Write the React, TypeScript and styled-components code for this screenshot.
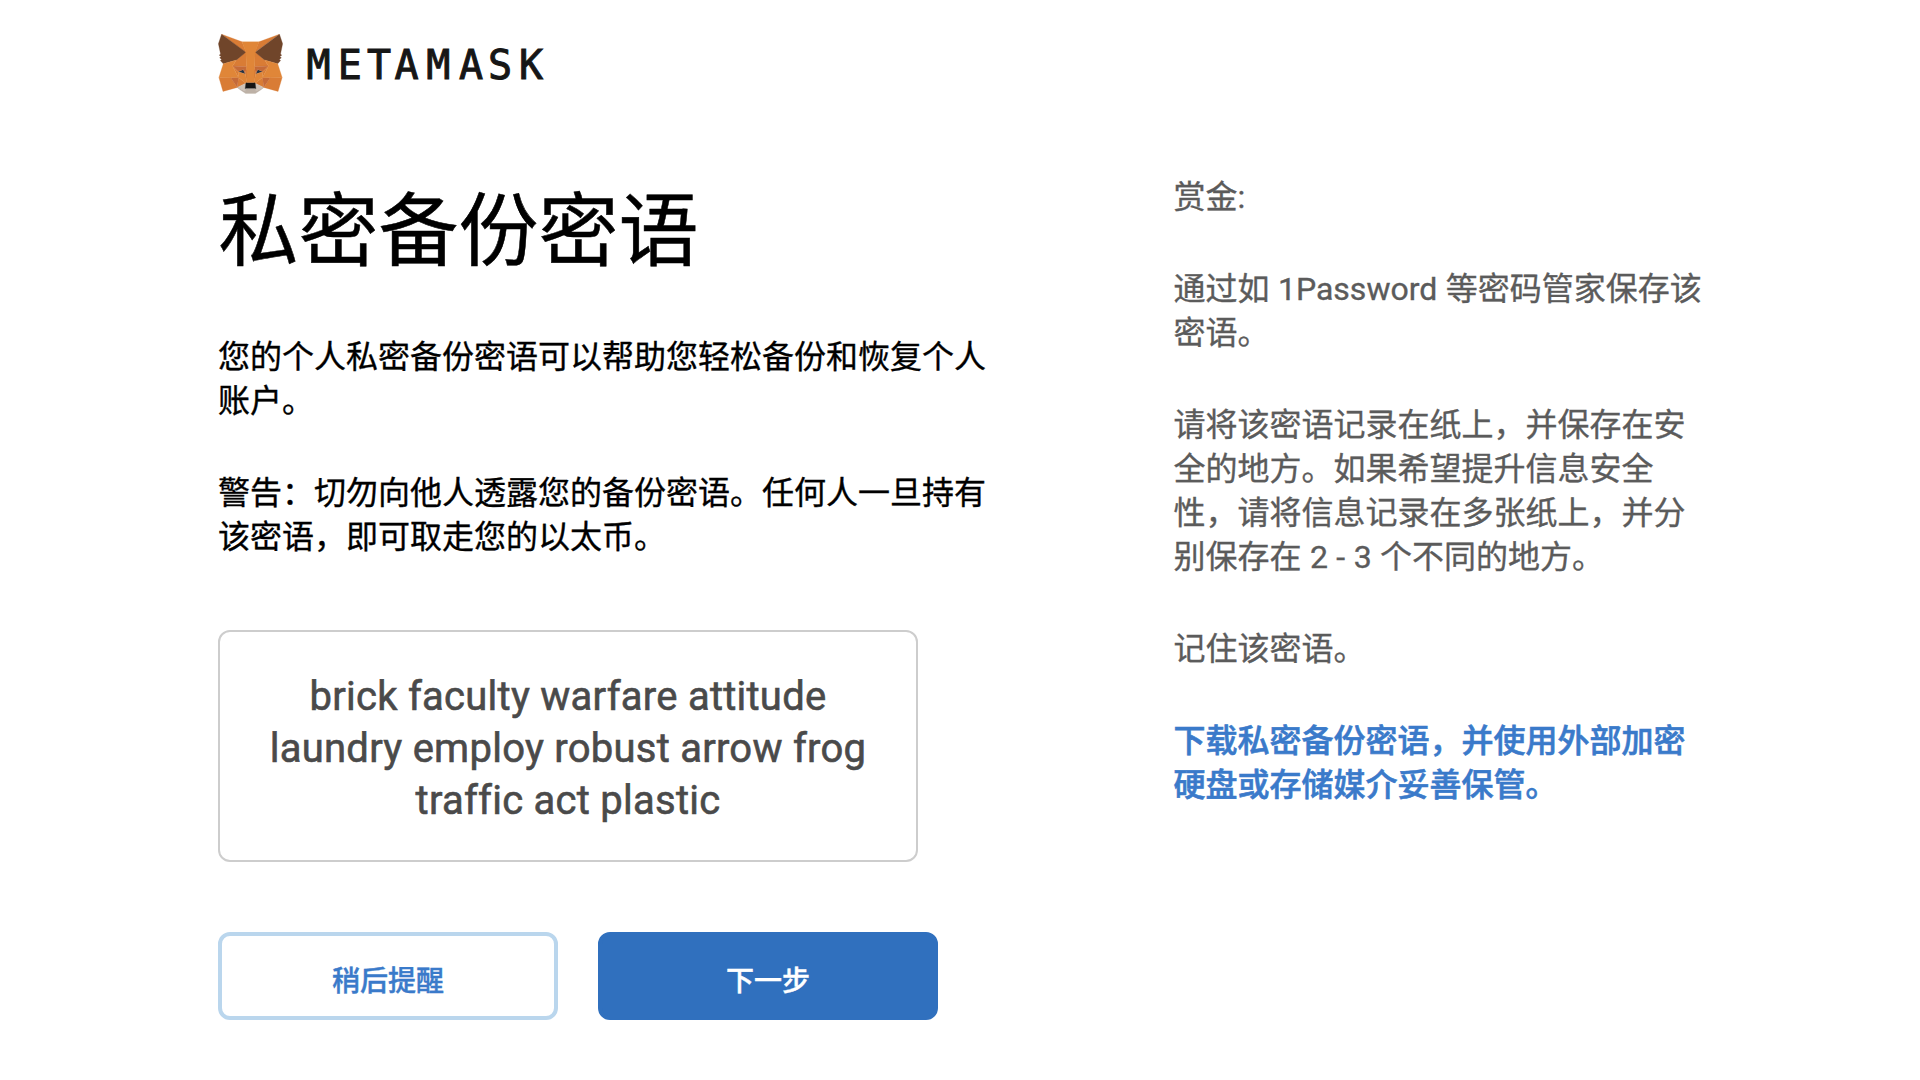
import React from "react";
import styled, { createGlobalStyle } from "styled-components";

const GlobalStyle = createGlobalStyle`
  * { box-sizing: border-box; }
  body {
    margin: 0;
    background: #fff;
    font-family: Roboto, "Noto Sans CJK SC", sans-serif;
    color: #000;
  }
`;

const Page = styled.div`
  height: 1080px;
  padding: 34px 0 0 218px;
  overflow: hidden;
`;

const Header = styled.header`
  display: flex;
  height: 60px;
  gap: 18px;
`;

const Fox = styled.svg`
  width: 65px;
  height: 60px;
  flex: none;
`;

const Wordmark = styled.svg`
  width: 260px;
  height: 60px;
  overflow: visible;
  font-family: "DejaVu Sans Mono", monospace;
  font-size: 40px;
  fill: #161616;
  stroke: #161616;
`;

const Columns = styled.main`
  display: flex;
  gap: 183.5px;
`;

const Primary = styled.section`
  width: 772px;
`;

const Aside = styled.aside`
  width: 540px;
  padding-top: 81px;
  word-spacing: 0.5px;
`;

const Title = styled.h1`
  margin: 82px 0 47px;
  padding-left: 0.5px;
  font-size: 80px;
  line-height: 112px;
  font-weight: 400;
  -webkit-text-stroke: 0.5px currentColor;
`;

const Paragraph = styled.p<{ $color?: string; $strong?: boolean }>`
  margin: 0 0 48px;
  font-size: 32px;
  line-height: 44px;
  color: ${(p) => p.$color ?? "#000"};
  font-weight: ${(p) => (p.$strong ? 500 : 400)};
  -webkit-text-stroke: ${(p) => (p.$strong ? 0.6 : 0.35)}px currentColor;
`;

const SecretBox = styled.div`
  display: flex;
  align-items: center;
  justify-content: center;
  width: 700px;
  height: 232px;
  margin-top: 71px;
  padding: 6px 40px 0;
  border: 2px solid #cdcdcd;
  border-radius: 12px;
  font-size: 40px;
  letter-spacing: 0.25px;
  font-variant-ligatures: none;
  line-height: 52px;
  color: #4a4a4a;
  -webkit-text-stroke: 0.6px currentColor;
  text-align: center;
`;

const Actions = styled.div`
  display: flex;
  gap: 40px;
  margin-top: 70px;
`;

const Button = styled.button<{ $primary?: boolean }>`
  width: 340px;
  height: 88px;
  padding: 12px 0 0;
  border: 4px solid ${(p) => (p.$primary ? "#3070be" : "#bad6ed")};
  border-radius: 12px;
  background: ${(p) => (p.$primary ? "#3070be" : "#fff")};
  color: ${(p) => (p.$primary ? "#fff" : "#3a7aca")};
  font: 500 28px/40px Roboto, "Noto Sans CJK SC", sans-serif;
  -webkit-text-stroke: 0.4px currentColor;
`;

const facets: [string, string][] = [
  ["#D97C35", "M32.96 1L19.82 10.72L22.27 4.99Z"],
  ["#D97C35", "M2.66 1L15.68 10.81L13.36 4.99Z"],
  ["#D97C35", "M28.23 23.53L24.73 28.87L32.22 30.93L34.36 23.65Z"],
  ["#D97C35", "M1.27 23.65L3.41 30.93L10.88 28.87L7.39 23.53Z"],
  ["#D97C35", "M10.47 14.51L8.39 17.65L15.8 17.99L15.55 9.98Z"],
  ["#D97C35", "M25.15 14.51L19.98 9.89L19.82 17.99L27.23 17.65Z"],
  ["#D97C35", "M10.87 28.87L15.34 26.71L11.5 23.7Z"],
  ["#D97C35", "M20.28 26.71L24.74 28.87L24.12 23.7Z"],
  ["#CFC3B8", "M24.74 28.87L20.28 26.71L20.64 29.61L20.6 30.83Z"],
  ["#CFC3B8", "M10.87 28.87L15.02 30.83L14.99 29.61L15.34 26.71Z"],
  ["#233447", "M15.1 21.78L11.39 20.7L14.01 19.49Z"],
  ["#233447", "M20.51 21.78L21.6 19.49L24.23 20.7Z"],
  ["#C56A38", "M10.87 28.87L11.52 23.53L7.39 23.65Z"],
  ["#C56A38", "M24.1 23.53L24.73 28.87L28.23 23.65Z"],
  ["#C56A38", "M27.23 17.65L19.82 17.99L20.51 21.78L21.6 19.49L24.23 20.7Z"],
  ["#C56A38", "M11.39 20.7L14.01 19.49L15.1 21.78L15.8 17.99L8.39 17.65Z"],
  ["#D97C35", "M8.39 17.65L11.5 23.7L11.39 20.7Z"],
  ["#D97C35", "M24.23 20.7L24.11 23.7L27.23 17.65Z"],
  ["#D97C35", "M15.8 17.99L15.1 21.78L15.97 26.27L16.17 20.36Z"],
  ["#D97C35", "M19.82 17.99L19.46 20.35L19.64 26.27L20.51 21.78Z"],
  ["#E08638", "M20.51 21.78L19.64 26.27L20.26 26.71L24.11 23.7L24.24 20.7Z"],
  ["#E08638", "M11.39 20.7L11.5 23.7L15.34 26.71L15.97 26.27L15.1 21.78Z"],
  ["#BDB1A6", "M20.6 30.83L20.64 29.61L20.3 29.32H15.31L14.99 29.61L15.02 30.83L10.87 28.87L12.33 30.06L15.28 32.1H20.34L23.31 30.06L24.73 28.87Z"],
  ["#161616", "M20.28 26.71L19.65 26.27H15.97L15.34 26.71L14.99 29.61L15.31 29.32H20.3L20.64 29.61Z"],
  ["#70452A", "M33.52 11.35L34.62 5.99L32.96 1L20.28 10.39L25.15 14.51L32.04 16.52L33.56 14.75L32.9 14.28L33.95 13.35L33.15 12.74L34.18 11.96Z"],
  ["#70452A", "M1 5.99L2.12 11.35L1.4 11.96L2.44 12.74L1.65 13.35L2.68 14.28L2.03 14.75L3.55 16.52L10.47 14.51L15.34 10.39L2.66 1Z"],
  ["#E08638", "M32.04 16.52L25.15 14.51L27.23 17.65L24.11 23.7L28.22 23.65H34.36Z"],
  ["#E08638", "M10.47 14.51L3.58 16.52L1.27 23.65H7.39L11.5 23.7L8.39 17.65Z"],
  ["#E08638", "M19.82 17.99L20.28 10.39L22.28 4.99H13.36L15.34 10.39L15.8 17.99L15.96 20.37L15.97 26.27H19.65L19.66 20.37Z"],
];

export default function App() {
  return (
    <>
      <GlobalStyle />
      <Page>
        <Header>
          <Fox viewBox="0.8 0.9 34 31.4">
            {facets.map(([color, d]) => (
              <path key={d} d={d} fill={color} stroke={color} strokeWidth={0.15} strokeLinejoin="round" />
            ))}
          </Fox>
          <Wordmark strokeWidth={1}>
            <text x="17.6 48.8 78 105.5 137.3 170 199 230" y="44.5" textAnchor="middle">METAMASK</text>
          </Wordmark>
        </Header>
        <Columns>
          <Primary>
            <Title>私密备份密语</Title>
            <Paragraph>您的个人私密备份密语可以帮助您轻松备份和恢复个人账户。</Paragraph>
            <Paragraph>警告：切勿向他人透露您的备份密语。任何人一旦持有该密语，即可取走您的以太币。</Paragraph>
            <SecretBox>brick faculty warfare attitude laundry employ robust arrow frog traffic act plastic</SecretBox>
            <Actions>
              <Button>稍后提醒</Button>
              <Button $primary>下一步</Button>
            </Actions>
          </Primary>
          <Aside>
            <Paragraph $color="#5b5b5b">赏金:</Paragraph>
            <Paragraph $color="#5b5b5b">通过如 1Password 等密码管家保存该密语。</Paragraph>
            <Paragraph $color="#5b5b5b">请将该密语记录在纸上，并保存在安全的地方。如果希望提升信息安全性，请将信息记录在多张纸上，并分别保存在 2 - 3 个不同的地方。</Paragraph>
            <Paragraph $color="#5b5b5b">记住该密语。</Paragraph>
            <Paragraph $color="#3a7aca" $strong>下载私密备份密语，并使用外部加密硬盘或存储媒介妥善保管。</Paragraph>
          </Aside>
        </Columns>
      </Page>
    </>
  );
}
